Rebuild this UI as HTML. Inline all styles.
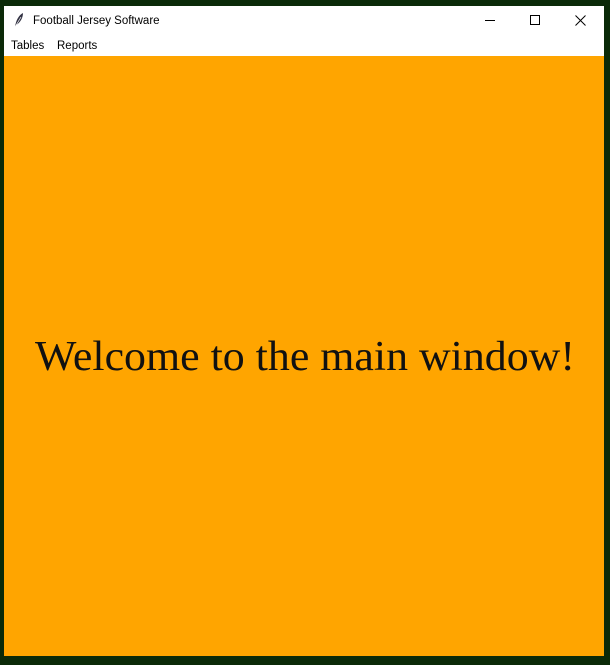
<!DOCTYPE html>
<html><head><style>
body{margin:0;width:610px;height:665px;background:#0b2a08;position:relative;overflow:hidden;font-family:"Liberation Sans",sans-serif}
.win{position:absolute;left:4px;top:6px;width:600px;height:650px;background:#fff}
.title{position:absolute;left:0;top:0;width:600px;height:30px;font-size:11.5px;color:#000}
.menu{position:absolute;left:0;top:30px;height:20px;font-size:11.5px}
.orange{position:absolute;left:0;top:50px;width:600px;height:600px;background:#ffa500}
</style></head><body>
<div class="win">
<div class="title">
<svg style="position:absolute;left:9px;top:6px" width="12" height="16" viewBox="0 0 12 16"><path d="M2 15 C3 8 6 3 10 1 C10 6 7 11 3 13 Z" fill="#334" /><path d="M2 15 L8 5" stroke="#fff" stroke-width="0.7"/></svg>
<span style="position:absolute;left:29px;top:9px">Football Jersey Software</span>
<div style="position:absolute;left:481px;top:14px;width:10px;height:1px;background:#000"></div>
<div style="position:absolute;left:526px;top:9px;width:8px;height:8px;border:1px solid #000"></div>
<svg style="position:absolute;left:571px;top:9px" width="11" height="11"><path d="M0.5 0.5L10.5 10.5M10.5 0.5L0.5 10.5" stroke="#000" stroke-width="1"/></svg>
</div>
<div class="menu"><span style="position:absolute;left:7px;top:4px">Tables</span><span style="position:absolute;left:53px;top:4px">Reports</span></div>
<div class="orange">
<svg width="600" height="600" style="position:absolute;left:0;top:0"><text x="31" y="314" font-family="'Liberation Serif',serif" font-size="42" textLength="540" lengthAdjust="spacingAndGlyphs" fill="#111">Welcome to the main window!</text></svg>
</div>
</div>
</body></html>
